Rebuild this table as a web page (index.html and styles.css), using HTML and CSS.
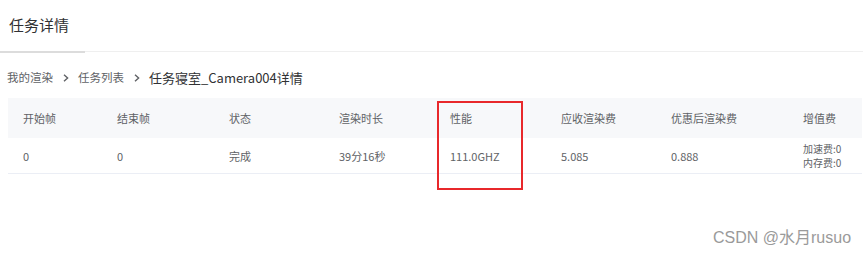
FILE: index.html
```html
<!DOCTYPE html>
<html lang="zh">
<head>
<meta charset="utf-8">
<title>任务详情</title>
<link rel="stylesheet" href="styles.css">
</head>
<body>
<div class="page">
  <header class="header">
    <h1 class="title">任务详情</h1>
  </header>
  <div class="divider">
    <div class="divider-active"></div>
    <div class="divider-rest"></div>
  </div>
  <nav class="crumbs">
    <span class="crumb">我的渲染</span>
    <svg class="sep" width="6" height="8" viewBox="0 0 6 8"><path d="M1 0.8 L4.6 4 L1 7.2" fill="none" stroke="#606266" stroke-width="1.4"/></svg>
    <span class="crumb">任务列表</span>
    <svg class="sep" width="6" height="8" viewBox="0 0 6 8"><path d="M1 0.8 L4.6 4 L1 7.2" fill="none" stroke="#606266" stroke-width="1.4"/></svg>
    <span class="crumb current">任务寝室_Camera004详情</span>
  </nav>
  <div class="table">
    <div class="row head">
      <div class="cell">开始帧</div>
      <div class="cell">结束帧</div>
      <div class="cell">状态</div>
      <div class="cell">渲染时长</div>
      <div class="cell">性能</div>
      <div class="cell">应收渲染费</div>
      <div class="cell">优惠后渲染费</div>
      <div class="cell">增值费</div>
    </div>
    <div class="row body">
      <div class="cell">0</div>
      <div class="cell">0</div>
      <div class="cell">完成</div>
      <div class="cell">39分16秒</div>
      <div class="cell">111.0GHZ</div>
      <div class="cell">5.085</div>
      <div class="cell">0.888</div>
      <div class="cell extra"><span>加速费:0</span><span>内存费:0</span></div>
    </div>
  </div>
  <div class="highlight"></div>
  <div class="watermark">CSDN @水月rusuo</div>
</div>
</body>
</html>
```
FILE: styles.css
```css
html, body {
  margin: 0;
  padding: 0;
  background: #ffffff;
}
.page {
  position: relative;
  width: 865px;
  height: 255px;
  font-family: "Noto Sans CJK SC", "Noto Sans", sans-serif;
  color: #606266;
  overflow: hidden;
}
.header {
  height: 51px;
  display: flex;
  align-items: center;
  padding-left: 9px;
}
.title {
  margin: 0;
  font-size: 15px;
  font-weight: 400;
  color: #303133;
  line-height: 20px;
  padding-bottom: 2px;
}
.divider {
  display: flex;
  align-items: flex-start;
  height: 2px;
}
.divider-active {
  width: 85px;
  height: 2px;
  background: #dcdcdc;
}
.divider-rest {
  flex: 1;
  height: 1px;
  margin-right: 2px;
  background: #efefef;
}
.crumbs {
  display: flex;
  align-items: center;
  height: 20px;
  margin: 14px 0 0 7px;
  font-size: 11.5px;
  color: #606266;
}
.sep {
  display: block;
  margin: 1px 9px 0 10px;
}
.crumb.current {
  color: #303133;
  font-size: 13px;
}
.table {
  margin: 11px 3px 0 8px;
}
.row {
  display: grid;
  grid-template-columns: 94px 112px 110px 111px 111px 110px 132px 1fr;
  align-items: center;
  font-size: 11px;
}
.row.head {
  height: 40px;
  background: #f7f8fa;
  color: #606266;
}
.row.body {
  height: 35px;
  border-bottom: 1px solid #ebeef5;
  color: #606266;
}
.cell {
  padding-left: 15px;
  white-space: nowrap;
}
.cell.extra {
  display: flex;
  flex-direction: column;
  font-size: 10px;
  line-height: 14px;
  padding-top: 1px;
}
.highlight {
  position: absolute;
  left: 437px;
  top: 101px;
  width: 82px;
  height: 85px;
  border: 2px solid #e8282b;
}
.watermark {
  position: absolute;
  left: 713px;
  top: 228px;
  font-family: "Liberation Sans", "Noto Sans CJK SC", sans-serif;
  font-size: 16px;
  color: #9a9a9a;
  line-height: 20px;
}
```
